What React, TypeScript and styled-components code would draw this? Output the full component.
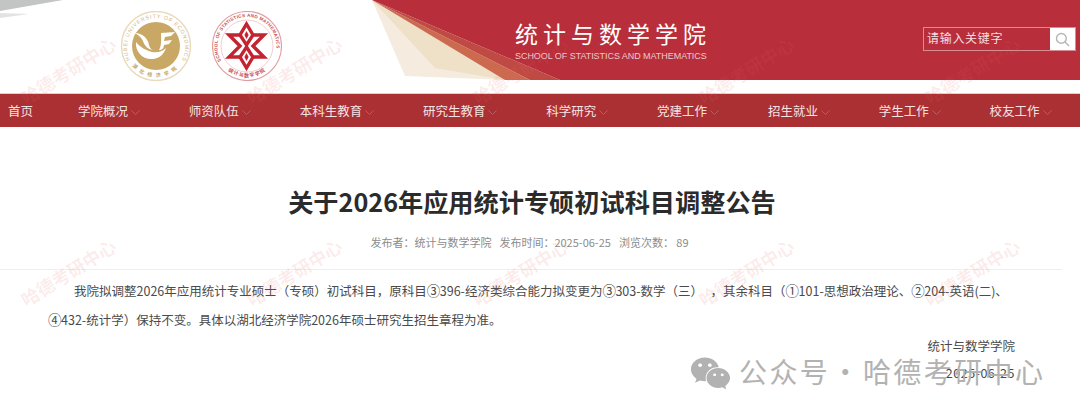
import React from 'react';
import styled, { createGlobalStyle } from 'styled-components';
import { FaWeixin } from 'react-icons/fa';

const navItems = ['学院概况', '师资队伍', '本科生教育', '研究生教育', '科学研究', '党建工作', '招生就业', '学生工作', '校友工作'];

function GoldLogo() {
  return (
    <LogoSvg viewBox="6 6 70 70">
      <defs>
        <path id="goldTop" d="M15.5 56 A29 29 0 1 1 66.5 56" />
        <path id="goldBottom" d="M12 52 A31 31 0 0 0 70 52" />
      </defs>
      <circle cx="41" cy="41" r="34.5" fill="#fff" stroke="#e8dabd" strokeWidth="1.4" />
      <circle cx="41" cy="41" r="24" fill="#c9a866" />
      <text fontSize="5.2" fill="#cdb27a" fontFamily="Liberation Sans, sans-serif" letterSpacing="0.95">
        <textPath href="#goldTop" startOffset="1%">HUBEI UNIVERSITY OF ECONOMICS</textPath>
      </text>
      <text fontSize="5" fill="#c2a264" fontWeight="700" fontFamily="Noto Sans CJK SC, sans-serif" letterSpacing="4" textAnchor="middle">
        <textPath href="#goldBottom" startOffset="50%">湖北经济学院</textPath>
      </text>
      <path fill="#fff" d="M21 37C20 47 28 55 38 54C45 53 49 49 51 43C47 47 42 48 37 47C30 45 25 42 21 37Z" />
      <path fill="#fff" d="M20 28C27 28 33 33 34 40C35 44 37 45 39 45C33 45 29 40 28 36C26 32 23 30 20 28Z" />
      <path fill="#fff" d="M44 45C47 40 46 33 46 28L60 27L56 31L50 32L49 36L57 35L54 39L49 40C49 43 47 45 44 45Z" />
    </LogoSvg>
  );
}

function RedLogo() {
  return (
    <LogoSvg viewBox="6 6 70 70">
      <defs>
        <path id="redTop" d="M16 57 A29.5 29.5 0 1 1 66 57" />
        <path id="redBottom" d="M12 52 A31 31 0 0 0 70 52" />
      </defs>
      <circle cx="41" cy="41" r="34.5" fill="#fff" stroke="#e39aa0" strokeWidth="1.1" />
      <circle cx="41" cy="41" r="26" fill="none" stroke="#eeb9bd" strokeWidth="0.7" />
      <text fontSize="4.6" fill="#c8505a" fontFamily="Liberation Sans, sans-serif" fontWeight="700" letterSpacing="0.25">
        <textPath href="#redTop" startOffset="1%">SCHOOL OF STATISTICS AND MATHEMATICS</textPath>
      </text>
      <text fontSize="5" fill="#c8505a" fontWeight="700" fontFamily="Noto Sans CJK SC, sans-serif" letterSpacing="0.8" textAnchor="middle">
        <textPath href="#redBottom" startOffset="50%">统计与数学学院</textPath>
      </text>
      <g fill="none" stroke="#c4242f" strokeWidth="3.4" strokeLinejoin="miter">
        <polyline points="34,30 23,30 34,41 23,52 34,52" />
        <polyline points="47,30 58,30 47,41 58,52 47,52" />
        <polygon points="40.5,19 47,30 40.5,40 34,30" />
        <polygon points="40.5,42 47,52 40.5,63 34,52" />
      </g>
      <polygon points="40.5,26 42.6,30 40.5,34 38.4,30" fill="#c4242f" />
      <polygon points="40.5,48 42.6,52 40.5,56 38.4,52" fill="#c4242f" />
    </LogoSvg>
  );
}

export default function App() {
  const marks = Array.from({ length: 10 }, (_, i) => i);
  return (
    <Page>
      <GlobalStyle />
      <Header>
        <Backdrop viewBox="0 0 1080 94" preserveAspectRatio="none">
          <polygon points="0,0 63,0 0,11" fill="#c3c5c4" />
          <polygon points="0,13 29,14 0,18" fill="#e2e3e2" />
          <polygon points="372,0 405,76 505,80" fill="#f5ebdf" />
          <polygon points="372,0 435,68 505,80" fill="#efe0c8" />
          <polygon points="372,0 505,80 530,80" fill="#cc6a50" />
          <polygon points="372,0 530,80 560,80" fill="#bf4a43" />
          <polygon points="372,0 1080,0 1080,80 560,80" fill="#b82e3a" />
        </Backdrop>
        <Logos>
          <GoldLogo />
          <RedLogo />
        </Logos>
        <Brand>
          <BrandName>统计与数学学院</BrandName>
          <BrandSub>SCHOOL OF STATISTICS AND MATHEMATICS</BrandSub>
        </Brand>
        <Search>
          <SearchText>请输入关键字</SearchText>
          <SearchButton>
            <svg width="15" height="15" viewBox="0 0 16 16" fill="none" stroke="#b5b5b5" strokeWidth="1.5">
              <circle cx="6.8" cy="6.8" r="5.2" />
              <line x1="10.6" y1="10.6" x2="15" y2="15" />
            </svg>
          </SearchButton>
        </Search>
      </Header>
      <Nav>
        <HomeLink>首页</HomeLink>
        {navItems.map(item => (
          <NavItem key={item}>
            {item}
            <svg width="9" height="5" viewBox="0 0 9 5" fill="none" stroke="#bd5a64" strokeWidth="1">
              <polyline points="0.5,0.5 4.5,4.5 8.5,0.5" />
            </svg>
          </NavItem>
        ))}
      </Nav>
      <Article>
        <Title>关于2026年应用统计专硕初试科目调整公告</Title>
        <Meta>
          <span>发布者：统计与数学学院</span>
          <span>发布时间：2025-06-25</span>
          <span>浏览次数： 89</span>
        </Meta>
        <Divider />
        <Body>
          <Indent />我院拟调整2026年应用统计专业硕士（专硕）初试科目，原科目<Circled>③</Circled>396-经济类综合能力拟变更为<Circled>③</Circled>303-数学（三）<Pause />，其余科目（<Circled>①</Circled>101-思想政治理论、<Circled>②</Circled>204-英语(二)、
          <br />
          <Circled>④</Circled>432-统计学）保持不变。具体以湖北经济学院2026年硕士研究生招生章程为准。
        </Body>
        <Sign>
          <span>统计与数学学院</span>
          <SignDate>2025-06-25</SignDate>
        </Sign>
      </Article>
      <Marks>
        {marks.map(i => (
          <Mark key={i}>哈德考研中心</Mark>
        ))}
      </Marks>
      <Account>
        <FaWeixin size={41} />
        <span>公众号 · 哈德考研中心</span>
      </Account>
    </Page>
  );
}

const GlobalStyle = createGlobalStyle`
  html, body {
    margin: 0;
    padding: 0;
    background: #fff;
  }
  body {
    font-family: "Noto Sans CJK SC", "Liberation Sans", sans-serif;
  }
`;

const Page = styled.div`
  position: relative;
  width: 1080px;
  height: 410px;
  overflow: hidden;
  background: #fff;
`;

const Header = styled.header`
  position: relative;
  height: 93px;
  display: flex;
  align-items: flex-start;
`;

const Backdrop = styled.svg`
  position: absolute;
  inset: 0;
  width: 1080px;
  height: 94px;
`;

const Logos = styled.div`
  position: relative;
  display: flex;
  gap: 21px;
  margin: 11px 0 0 121px;
`;

const LogoSvg = styled.svg`
  width: 70px;
  height: 70px;
  display: block;
`;

const Brand = styled.div`
  position: relative;
  margin: 18px 0 0 233px;
  width: 195px;
`;

const BrandName = styled.div`
  color: #fff;
  font-size: 23px;
  line-height: 30px;
  letter-spacing: 5px;
  white-space: nowrap;
`;

const BrandSub = styled.div`
  color: #eec9cc;
  font-family: "Liberation Sans", sans-serif;
  font-size: 9px;
  line-height: 12px;
  margin-top: 2px;
  letter-spacing: -0.05px;
  white-space: nowrap;
`;

const Search = styled.div`
  position: relative;
  margin: 27px 0 0 213px;
  width: 153px;
  height: 24px;
  display: flex;
  box-sizing: border-box;
  border: 1px solid #d88d93;
`;

const SearchText = styled.div`
  flex: 1;
  color: #f6dfe1;
  font-size: 12px;
  line-height: 19px;
  padding-left: 3px;
  letter-spacing: 0.7px;
`;

const SearchButton = styled.div`
  width: 25px;
  background: #fff;
  display: flex;
  align-items: center;
  justify-content: center;
`;

const Nav = styled.nav`
  height: 33px;
  border-top: 1px solid #eec9c9;
  background: #ab3033;
  display: flex;
  align-items: center;
  gap: 45px;
  padding-left: 8px;
  color: #f5e4e4;
  font-size: 12.5px;
  line-height: 31px;
  white-space: nowrap;
`;

const HomeLink = styled.span`
  display: block;
`;

const NavItem = styled.span`
  display: flex;
  align-items: center;
  gap: 3px;
  padding-right: 3.8px;

  svg {
    margin-top: 3px;
  }
`;

const Article = styled.main`
  display: flex;
  flex-direction: column;
  color: #444;
`;

const Title = styled.h1`
  margin: 57px 0 0;
  text-align: center;
  padding-right: 16px;
  color: #2b2b2b;
  font-size: 25.2px;
  line-height: 34px;
  font-weight: 700;
`;

const Meta = styled.div`
  display: flex;
  justify-content: center;
  gap: 8px;
  margin-top: 16px;
  padding-right: 21px;
  color: #8c8c8c;
  font-size: 11px;
  line-height: 16px;
`;

const Divider = styled.div`
  width: 1062px;
  height: 1px;
  margin-top: 19px;
  background: #eeeeee;
`;

const Body = styled.p`
  margin: 6px 0 0;
  padding-left: 48px;
  font-size: 12.5px;
  line-height: 29px;
  color: #4a4a4a;
  white-space: nowrap;
`;

const Indent = styled.span`
  display: inline-block;
  width: 26px;
`;

const Pause = styled.span`
  display: inline-block;
  width: 7.5px;
`;

const Circled = styled.span`
  display: inline-block;
  width: 13px;
  font-size: 13.5px;
  text-align: center;
`;

const Sign = styled.div`
  display: flex;
  flex-direction: column;
  align-items: flex-end;
  margin-top: -2px;
  padding-right: 65px;
  color: #4a4a4a;
  font-size: 12.5px;
  line-height: 27px;
`;

const SignDate = styled.span`
  letter-spacing: 0.5px;
`;

const Marks = styled.div`
  position: absolute;
  left: -45px;
  top: -31px;
  display: grid;
  grid-template-columns: repeat(5, 226px);
  grid-auto-rows: 202px;
  place-items: center;
  pointer-events: none;
`;

const Mark = styled.span`
  transform: rotate(-32deg);
  color: rgba(232, 96, 96, 0.13);
  font-size: 18px;
  font-weight: 700;
  line-height: 24px;
  white-space: nowrap;
`;

const Account = styled.div`
  position: absolute;
  left: 690px;
  top: 347px;
  display: flex;
  align-items: center;
  gap: 8px;
  color: #b2b2b2;
  font-size: 28px;
  line-height: 40px;
  letter-spacing: 2.4px;
  word-spacing: -7.5px;
  white-space: nowrap;
  pointer-events: none;

  svg {
    margin-top: 6px;
  }
`;
